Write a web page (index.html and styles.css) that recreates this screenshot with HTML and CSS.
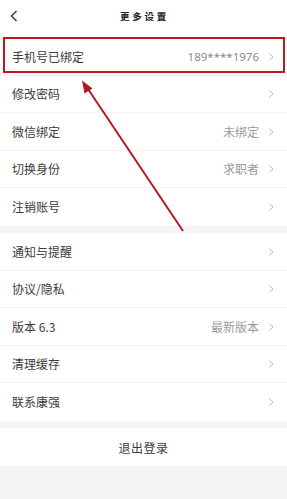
FILE: index.html
```html
<!DOCTYPE html>
<html lang="zh">
<head>
<meta charset="utf-8">
<link rel="stylesheet" href="styles.css">
</head>
<body>
<div class="page">
  <header class="topbar">
    <svg class="back" width="8" height="12" viewBox="0 0 8 12"><path d="M6.5 1 L1.5 6 L6.5 11" fill="none" stroke="#333" stroke-width="1.4"/></svg>
    <div class="title">更多设置</div>
  </header>

  <section class="group">
    <div class="row"><span class="label">手机号已绑定</span><span class="value num">189****1976</span><svg class="chev" viewBox="0 0 6 8"><path d="M1 0.5 L5 4 L1 7.5" fill="none" stroke="#bdbdbd" stroke-width="1"/></svg></div>
    <div class="row"><span class="label">修改密码</span><span class="value"></span><svg class="chev" viewBox="0 0 6 8"><path d="M1 0.5 L5 4 L1 7.5" fill="none" stroke="#bdbdbd" stroke-width="1"/></svg></div>
    <div class="row"><span class="label">微信绑定</span><span class="value">未绑定</span><svg class="chev" viewBox="0 0 6 8"><path d="M1 0.5 L5 4 L1 7.5" fill="none" stroke="#bdbdbd" stroke-width="1"/></svg></div>
    <div class="row"><span class="label">切换身份</span><span class="value">求职者</span><svg class="chev" viewBox="0 0 6 8"><path d="M1 0.5 L5 4 L1 7.5" fill="none" stroke="#bdbdbd" stroke-width="1"/></svg></div>
    <div class="row"><span class="label">注销账号</span><span class="value"></span><svg class="chev" viewBox="0 0 6 8"><path d="M1 0.5 L5 4 L1 7.5" fill="none" stroke="#bdbdbd" stroke-width="1"/></svg></div>
  </section>

  <section class="group">
    <div class="row"><span class="label">通知与提醒</span><span class="value"></span><svg class="chev" viewBox="0 0 6 8"><path d="M1 0.5 L5 4 L1 7.5" fill="none" stroke="#bdbdbd" stroke-width="1"/></svg></div>
    <div class="row"><span class="label">协议/隐私</span><span class="value"></span><svg class="chev" viewBox="0 0 6 8"><path d="M1 0.5 L5 4 L1 7.5" fill="none" stroke="#bdbdbd" stroke-width="1"/></svg></div>
    <div class="row"><span class="label">版本 6.3</span><span class="value">最新版本</span><svg class="chev" viewBox="0 0 6 8"><path d="M1 0.5 L5 4 L1 7.5" fill="none" stroke="#bdbdbd" stroke-width="1"/></svg></div>
    <div class="row"><span class="label">清理缓存</span><span class="value"></span><svg class="chev" viewBox="0 0 6 8"><path d="M1 0.5 L5 4 L1 7.5" fill="none" stroke="#bdbdbd" stroke-width="1"/></svg></div>
    <div class="row"><span class="label">联系康强</span><span class="value"></span><svg class="chev" viewBox="0 0 6 8"><path d="M1 0.5 L5 4 L1 7.5" fill="none" stroke="#bdbdbd" stroke-width="1"/></svg></div>
  </section>

  <section class="group">
    <div class="logout">退出登录</div>
  </section>

  <div class="highlight"></div>
  <svg class="arrow" width="287" height="499" viewBox="0 0 287 499">
    <line x1="183" y1="231" x2="88" y2="89" stroke="#b3191f" stroke-width="2"/>
    <path d="M82 80.5 L92.5 88.5 L84.5 93.5 Z" fill="#b3191f"/>
  </svg>
</div>
</body>
</html>
```

FILE: styles.css
```css
* { box-sizing: border-box; }
html, body {
  margin: 0;
  padding: 0;
  background: #f5f5f5;
}
body {
  font-family: "Noto Sans CJK SC", "Noto Sans", sans-serif;
  color: #333;
}
.page {
  position: relative;
  width: 287px;
  min-height: 499px;
}
.topbar {
  position: relative;
  height: 38.3px;
  background: #fff;
  display: flex;
  align-items: center;
  justify-content: center;
}
.back {
  position: absolute;
  left: 10px;
  top: 10px;
}
.title {
  font-size: 9.5px;
  letter-spacing: 2.8px;
  font-weight: 700;
  color: #222;
  margin-left: 2px;
  margin-top: -6px;
}
.group {
  background: #fff;
  margin-bottom: 7.5px;
}
.row {
  height: 37.5px;
  display: flex;
  align-items: center;
  padding: 0 13px 0 12px;
  border-bottom: 1px solid #f3f3f3;
}
.row:last-child { border-bottom: none; }
.label {
  flex: 1;
  font-size: 12px;
  color: #3c3c3c;
  line-height: 1;
}
.value {
  font-size: 12px;
  color: #9a9a9a;
  line-height: 1;
  margin-right: 9px;
}
.num {
  font-family: "Noto Sans", sans-serif;
  font-size: 11.5px;
  color: #8a8a8a;
}
.chev {
  width: 6px;
  height: 8px;
  flex: none;
}
.logout {
  height: 38px;
  display: flex;
  align-items: center;
  justify-content: center;
  font-size: 12px;
  color: #3c3c3c;
  letter-spacing: 0.5px;
}
.highlight {
  position: absolute;
  left: 3px;
  top: 37px;
  width: 282px;
  height: 36px;
  border: 2px solid #c0161d;
}
.arrow {
  position: absolute;
  left: 0;
  top: 0;
  pointer-events: none;
}
```
